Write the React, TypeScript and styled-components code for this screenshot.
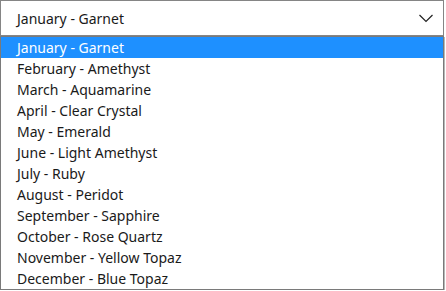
import React from "react";
import styled, { createGlobalStyle } from "styled-components";

const Global = createGlobalStyle`
  html, body { margin: 0; padding: 0; background: #ffffff; }
  body { font-family: "Noto Sans", "DejaVu Sans", sans-serif; }
`;

const months = [
  "January - Garnet",
  "February - Amethyst",
  "March - Aquamarine",
  "April - Clear Crystal",
  "May - Emerald",
  "June - Light Amethyst",
  "July - Ruby",
  "August - Peridot",
  "September - Sapphire",
  "October - Rose Quartz",
  "November - Yellow Topaz",
  "December - Blue Topaz",
];

const Wrapper = styled.div`
  width: 444px;
  display: flex;
  flex-direction: column;
`;

const SelectBox = styled.div`
  box-sizing: border-box;
  height: 36px;
  border: 1px solid #858585;
  display: flex;
  align-items: center;
  justify-content: space-between;
  padding: 1px 9px 0 16px;
  font-size: 14px;
  color: #1a1a1a;
`;

const Chevron = styled.svg`
  width: 16px;
  height: 10px;
  display: block;
  margin-top: -1px;
`;

const List = styled.ul`
  box-sizing: border-box;
  margin: 0;
  padding: 0;
  list-style: none;
  border: 1px solid #7a7a7a;
  box-shadow: 1px 1px 0 #b8b8b8;
`;

const Option = styled.li<{ $active?: boolean }>`
  height: 21px;
  line-height: 21px;
  padding-left: 16px;
  font-size: 14px;
  color: ${(p) => (p.$active ? "#ffffff" : "#1a1a1a")};
  background: ${(p) => (p.$active ? "#1e90ff" : "transparent")};
  white-space: nowrap;
`;

export default function App() {
  return (
    <>
      <Global />
      <Wrapper>
        <SelectBox>
          <span>{months[0]}</span>
          <Chevron viewBox="0 0 16 10">
            <path d="M1.5 2 L8 8.5 L14.5 2" fill="none" stroke="#222" strokeWidth="1.2" />
          </Chevron>
        </SelectBox>
        <List>
          {months.map((m, i) => (
            <Option key={m} $active={i === 0}>
              {m}
            </Option>
          ))}
        </List>
      </Wrapper>
    </>
  );
}
